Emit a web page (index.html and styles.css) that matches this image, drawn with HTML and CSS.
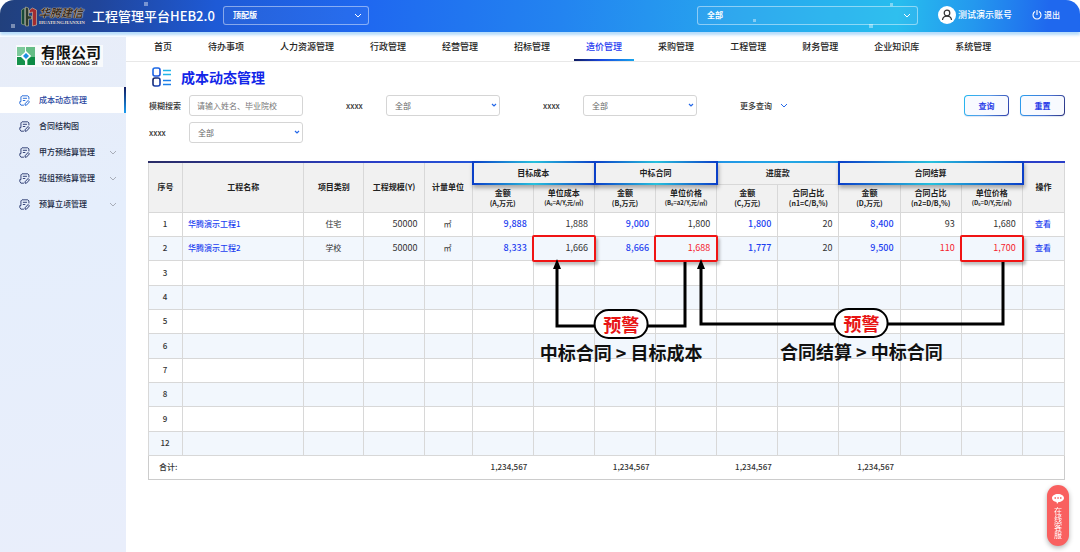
FILE: index.html
```html
<!DOCTYPE html>
<html lang="zh-CN">
<head>
    <meta charset="UTF-8">
    <meta name="viewport" content="width=device-width, initial-scale=1.0">
    <title>成本动态管理 - 工程管理平台HEB2.0</title>
    <link rel="stylesheet" href="styles.css">
</head>
<body>
    <svg class="sprite" aria-hidden="true">
        <symbol id="icon-doc" viewBox="0 0 20 20">
            <path d="M18 8V3.500L16 1.500H5.500L3.500 3.500V12H1.500v3.500L3.500 18.500H9" fill="none" stroke="currentColor" stroke-width="1.700" stroke-linejoin="round"/>
            <path d="M7 6h7.500M7 10h4.500" stroke="currentColor" stroke-width="1.700"/>
            <path d="M11 16l5.500-6 2.500 2.500-5.500 6H11z" fill="none" stroke="currentColor" stroke-width="1.800" stroke-linejoin="round"/>
        </symbol>
        <symbol id="icon-down" viewBox="0 0 8 5">
            <path d="M1 1l3 3 3-3" fill="none" stroke="currentColor"/>
        </symbol>
    </svg>

    <header class="topbar">
        <i class="dot dot-1"></i><i class="dot dot-2"></i><i class="dot dot-3"></i><i class="dot dot-4"></i><i class="dot dot-5"></i>
        <div class="brand">
            <svg class="brand-mark" viewBox="0 0 17 21" aria-hidden="true">
                <path d="M1 4l3-2v17l-3-1z" fill="#174a38" stroke="#a9b08c" stroke-width=".6"/>
                <path d="M5 1l3 1v8h3v3H8v7H5z" fill="#2c3a2c" stroke="#c9c39c" stroke-width=".6"/>
                <path d="M9 4l3-2 4 2v15l-4 1V6L9 7z" fill="#a32c30" stroke="#d9c3a4" stroke-width=".6"/>
            </svg>
            <div class="brand-name">
                <span class="brand-cn">华腾建信</span>
                <span class="brand-en">HUATENGJIANXIN</span>
            </div>
            <span class="brand-title">工程管理平台HEB2.0</span>
        </div>
        <select class="top-select" aria-label="版本"><option>顶配版</option></select>
        <select class="top-select top-select-wide" aria-label="范围"><option>全部</option></select>
        <div class="user">
            <svg class="avatar" viewBox="0 0 18 18" aria-hidden="true">
                <circle cx="9" cy="9" r="9" fill="#fff"/>
                <circle cx="9" cy="7" r="2.800" fill="none" stroke="#333" stroke-width="1.200"/>
                <path d="M4.500 14c.3-5.300 8.700-5.300 9 0" fill="none" stroke="#333" stroke-width="1.200"/>
            </svg>
            <span>测试演示账号</span>
        </div>
        <button type="button" class="logout">
            <svg viewBox="0 0 10 10" aria-hidden="true"><path d="M5 0v5M3 1.600a4 4 0 1 0 4 0" fill="none" stroke="currentColor" stroke-width="1.100"/></svg>
            退出
        </button>
    </header>

    <div class="layout">
        <aside class="sidebar">
            <div class="company">
                <svg viewBox="0 0 20 20" aria-hidden="true">
                    <path d="M1 1h8v7H7L5 10H1z" fill="#7cc99b"/>
                    <path d="M10 1h9v18h-8v-6l4-3-5-4z" fill="#65bd86"/>
                    <path d="M1 11h4l4 4v4H1z" fill="#15924c"/>
                    <path d="M12 13l3-2h4v8h-7z" fill="#0c8a44"/>
                    <path d="M10 5l5 5-5 5-5-5z" fill="#fff"/>
                    <path d="M10 7l3 3-3 3-3-3z" fill="#1c8fe0"/>
                </svg>
                <div class="company-name">
                    <span class="company-cn">有限公司</span>
                    <span class="company-en">YOU XIAN GONG SI</span>
                </div>
            </div>
            <nav class="side-nav" aria-label="侧栏">
                <a href="#" class="active"><svg class="doc"><use href="#icon-doc"/></svg>成本动态管理</a>
                <a href="#"><svg class="doc"><use href="#icon-doc"/></svg>合同结构图</a>
                <a href="#"><svg class="doc"><use href="#icon-doc"/></svg>甲方预结算管理<svg class="arrow"><use href="#icon-down"/></svg></a>
                <a href="#"><svg class="doc"><use href="#icon-doc"/></svg>班组预结算管理<svg class="arrow"><use href="#icon-down"/></svg></a>
                <a href="#"><svg class="doc"><use href="#icon-doc"/></svg>预算立项管理<svg class="arrow"><use href="#icon-down"/></svg></a>
            </nav>
        </aside>

        <main class="main">
            <nav class="main-nav" aria-label="主导航">
                <a href="#">首页</a>
                <a href="#">待办事项</a>
                <a href="#">人力资源管理</a>
                <a href="#">行政管理</a>
                <a href="#">经营管理</a>
                <a href="#">招标管理</a>
                <a href="#" class="active">造价管理</a>
                <a href="#">采购管理</a>
                <a href="#">工程管理</a>
                <a href="#">财务管理</a>
                <a href="#">企业知识库</a>
                <a href="#">系统管理</a>
            </nav>

            <section class="content">
                <div class="page-title">
                    <svg viewBox="0 0 20 20" aria-hidden="true">
                        <defs>
                            <linearGradient id="title-a" x2="1" y2="1"><stop stop-color="#1d6fe8"/><stop offset="1" stop-color="#1d4fd8"/></linearGradient>
                            <linearGradient id="title-b" x2="1" y2="1"><stop stop-color="#121f58"/><stop offset="1" stop-color="#1a49c8"/></linearGradient>
                        </defs>
                        <rect x="1" y="1" width="7" height="8" rx="2" fill="none" stroke="url(#title-a)" stroke-width="1.600"/>
                        <rect x="1" y="11" width="7" height="8" rx="2" fill="none" stroke="url(#title-b)" stroke-width="1.600"/>
                        <path d="M11 3.500h8M11 7.500h8" stroke="#21b4e8" stroke-width="1.400"/>
                        <path d="M11 13.500h8M11 17.500h8" stroke="#1c7fe8" stroke-width="1.400"/>
                    </svg>
                    <h1>成本动态管理</h1>
                </div>

                <form class="filters">
                    <div class="field"><label for="keyword">模糊搜索</label><input id="keyword" type="text" placeholder="请输入姓名、毕业院校"></div>
                    <div class="field"><label for="filter1">xxxx</label><select id="filter1"><option>全部</option></select></div>
                    <div class="field"><label for="filter2">xxxx</label><select id="filter2"><option>全部</option></select></div>
                    <button type="button" class="more">更多查询 <svg><use href="#icon-down"/></svg></button>
                    <div class="actions">
                        <button type="submit" class="btn">查询</button>
                        <button type="reset" class="btn btn-reset">重置</button>
                    </div>
                    <div class="field"><label for="filter3">xxxx</label><select id="filter3"><option>全部</option></select></div>
                </form>

                <div class="table-wrap">
                    <table class="cost-table">
                        <colgroup>
                            <col class="c-no"><col class="c-name"><col class="c-type"><col class="c-type"><col class="c-unit">
                            <col span="9" class="c-num"><col class="c-op">
                        </colgroup>
                        <thead>
                            <tr class="head-group">
                                <th rowspan="2">序号</th>
                                <th rowspan="2">工程名称</th>
                                <th rowspan="2">项目类别</th>
                                <th rowspan="2">工程规模(Y)</th>
                                <th rowspan="2">计量单位</th>
                                <th colspan="2" class="marked">目标成本</th>
                                <th colspan="2" class="marked">中标合同</th>
                                <th colspan="2">进度款</th>
                                <th colspan="3" class="marked">合同结算</th>
                                <th rowspan="2">操作</th>
                            </tr>
                            <tr class="head-sub">
                                <th>金额<span>(A,万元)</span></th>
                                <th>单位成本<small>(A₀=A/Y,元/㎡)</small></th>
                                <th>金额<span>(B,万元)</span></th>
                                <th>单位价格<small>(B₀=a2/Y,元/㎡)</small></th>
                                <th>金额<span>(C,万元)</span></th>
                                <th>合同占比<span>(n1=C/B,%)</span></th>
                                <th>金额<span>(D,万元)</span></th>
                                <th>合同占比<span>(n2=D/B,%)</span></th>
                                <th>单位价格<small>(D₀=D/Y,元/㎡)</small></th>
                            </tr>
                        </thead>
                        <tbody>
                            <tr>
                                <td>1</td><td class="name"><a href="#">华腾演示工程1</a></td><td>住宅</td><td class="num">50000</td><td>㎡</td>
                                <td class="num blue">9,888</td><td class="num">1,888</td><td class="num blue">9,000</td><td class="num">1,800</td>
                                <td class="num blue">1,800</td><td class="num">20</td><td class="num blue">8,400</td><td class="num">93</td><td class="num">1,680</td>
                                <td><a href="#">查看</a></td>
                            </tr>
                            <tr>
                                <td>2</td><td class="name"><a href="#">华腾演示工程2</a></td><td>学校</td><td class="num">50000</td><td>㎡</td>
                                <td class="num blue">8,333</td><td class="num alert">1,666</td><td class="num blue">8,666</td><td class="num red alert">1,688</td>
                                <td class="num blue">1,777</td><td class="num">20</td><td class="num blue">9,500</td><td class="num red">110</td><td class="num red alert">1,700</td>
                                <td><a href="#">查看</a></td>
                            </tr>
                            <tr><td>3</td><td></td><td></td><td></td><td></td><td></td><td></td><td></td><td></td><td></td><td></td><td></td><td></td><td></td><td></td></tr>
                            <tr><td>4</td><td></td><td></td><td></td><td></td><td></td><td></td><td></td><td></td><td></td><td></td><td></td><td></td><td></td><td></td></tr>
                            <tr><td>5</td><td></td><td></td><td></td><td></td><td></td><td></td><td></td><td></td><td></td><td></td><td></td><td></td><td></td><td></td></tr>
                            <tr><td>6</td><td></td><td></td><td></td><td></td><td></td><td></td><td></td><td></td><td></td><td></td><td></td><td></td><td></td><td></td></tr>
                            <tr><td>7</td><td></td><td></td><td></td><td></td><td></td><td></td><td></td><td></td><td></td><td></td><td></td><td></td><td></td><td></td></tr>
                            <tr><td>8</td><td></td><td></td><td></td><td></td><td></td><td></td><td></td><td></td><td></td><td></td><td></td><td></td><td></td><td></td></tr>
                            <tr><td>9</td><td></td><td></td><td></td><td></td><td></td><td></td><td></td><td></td><td></td><td></td><td></td><td></td><td></td><td></td></tr>
                            <tr><td>12</td><td></td><td></td><td></td><td></td><td></td><td></td><td></td><td></td><td></td><td></td><td></td><td></td><td></td><td></td></tr>
                        </tbody>
                        <tfoot>
                            <tr>
                                <td colspan="5" class="total-label">合计:</td>
                                <td class="num">1,234,567</td><td></td><td class="num">1,234,567</td><td></td>
                                <td class="num">1,234,567</td><td></td><td class="num">1,234,567</td><td></td><td></td><td></td>
                            </tr>
                        </tfoot>
                    </table>

                    <!-- warning arrows between the compared cells -->
                    <svg class="links" viewBox="0 0 917 318" preserveAspectRatio="none" aria-hidden="true">
                        <g fill="none" stroke="#000" stroke-width="3">
                            <path d="M409 106v59h128v-64"/>
                            <path d="M553 106v57h302v-62"/>
                        </g>
                        <path d="M409 98l4 10h-8zM553 98l4 10h-8z"/>
                    </svg>
                    <div class="warning warning-target"><span class="badge">预警</span><strong>中标合同 &gt; 目标成本</strong></div>
                    <div class="warning warning-settle"><span class="badge">预警</span><strong>合同结算 &gt; 中标合同</strong></div>
                </div>
            </section>
        </main>
    </div>

    <button type="button" class="service">
        <svg viewBox="0 0 12 10" aria-hidden="true">
            <path d="M6 0c3.500 0 6 1.800 6 4S9.500 8 6.500 8L5 10 4.500 8C2 7.800 0 6.200 0 4s2.500-4 6-4z" fill="#fff"/>
            <path d="M2.500 4h1.500M5.300 4h1.500M8 4h1.500" stroke="#f9605f" stroke-width="1.300"/>
        </svg>
        <span>在线客服</span>
    </button>
</body>
</html>
```
FILE: styles.css
```css
:root {
    --blue: #1d3ff0;
    --line: #d8d8d8;
    --text: #333;
    --red: #f5222d;
    --font: "Noto Sans CJK SC", "Open Sans", sans-serif;
}
*, *::before, *::after { box-sizing: border-box; }
body { margin: 0; min-height: 100vh; display: flex; flex-direction: column; background: #fff; color: var(--text); font-family: var(--font); font-size: 8px; line-height: 12px; }
a { color: inherit; text-decoration: none; }
button, input, select { font: inherit; color: inherit; margin: 0; }
button { cursor: pointer; background: none; border: 0; padding: 0; }
select { appearance: none; }
.sprite { position: absolute; width: 0; height: 0; }

/* top bar */
.topbar {
    position: relative; display: flex; align-items: center; height: 32px; padding: 0 20px;
    border-radius: 14px 14px 0 0; color: #fff; box-shadow: 0 3px 3px #b5dcfb;
    background: linear-gradient(95deg, #21407c 0%, #20459a 9%, #1e5ad6 20%, #1f68f0 34%, #2384f0 52%, #27a5ee 68%, #27bdee 83%, #2498ee 90%, #1f68ee 97%);
}
.dot { position: absolute; width: 4px; height: 4px; background: #fff; opacity: .4; }
.dot-1 { left: 11px; top: 24px; }
.dot-2 { left: 144px; top: 2px; }
.dot-3 { left: 753px; top: 19px; width: 3px; height: 3px; }
.dot-4 { left: 869px; top: 24px; }
.dot-5 { left: 890px; top: 3px; width: 3px; height: 3px; }
.brand { display: flex; align-items: center; width: 203px; }
.brand-mark { width: 18px; height: 21px; flex-shrink: 0; }
.brand-name { display: flex; flex-direction: column; width: 46px; margin: 0 7px 0 1px; white-space: nowrap; }
.brand-cn { color: #3a2c20; font-size: 11px; font-weight: 700; font-style: italic; line-height: 13px; text-shadow: 0 0 1px #f5ead0, 0 0 1px #f5ead0; }
.brand-en { font-family: "Liberation Serif", serif; font-size: 5px; font-weight: 700; line-height: 7px; color: #e0dcd0; }
.brand-title { font-size: 13px; font-weight: 500; line-height: 20px; white-space: nowrap; }
.top-select {
    width: 146px; height: 19px; margin-bottom: 2px; padding: 0 9px; border: 1px solid rgba(255, 255, 255, .45); border-radius: 3px; font-weight: 600;
    background: rgba(255, 255, 255, .04) url("data:image/svg+xml,%3Csvg xmlns='http://www.w3.org/2000/svg' width='8' height='5'%3E%3Cpath d='M1 1l3 3 3-3' fill='none' stroke='white'/%3E%3C/svg%3E") no-repeat right 6px center;
}
.top-select option { color: var(--text); }
.top-select-wide { width: 221px; margin-left: auto; }
.user { display: flex; align-items: center; gap: 2px; margin: 0 20px 2px 20px; font-size: 9px; font-weight: 500; }
.avatar { width: 18px; height: 18px; }
.logout { display: flex; align-items: center; gap: 2px; margin-bottom: 2px; font-weight: 500; }
.logout svg { width: 10px; height: 10px; }

.layout { display: flex; flex: 1; }

/* sidebar */
.sidebar { width: 126px; flex-shrink: 0; margin-top: 5px; background: linear-gradient(170deg, #e8edf8, #e5eefc 35%, #e9eefb); }
.company { display: flex; align-items: center; gap: 5px; height: 22px; width: 87px; margin: 8px 0 20px 16px; background: #f8fafc; }
.company svg { width: 20px; height: 20px; flex-shrink: 0; }
.company-name { display: flex; flex-direction: column; color: #111; white-space: nowrap; }
.company-cn { font-family: "Liberation Sans", "Noto Sans CJK SC", sans-serif; font-size: 15px; font-weight: 700; line-height: 15px; }
.company-en { font-family: "Liberation Sans", sans-serif; font-size: 6px; font-weight: 700; line-height: 7px; }
.side-nav a { display: flex; align-items: center; height: 26px; padding: 0 9px 0 19px; color: #222b45; font-weight: 500; }
.side-nav .doc { width: 11px; height: 11px; margin-right: 9px; color: #2b3a70; }
.side-nav .arrow { width: 8px; height: 5px; margin-left: auto; color: #a8adb8; }
.side-nav .active { background: linear-gradient(#101a60, #1a9cf0) right / 2px 100% no-repeat #fff; color: #2a47a0; }
.side-nav .active .doc { color: #2168d8; }

/* main navigation */
.main { flex: 1; min-width: 0; }
.main-nav { display: flex; gap: 12px; height: 30px; padding-left: 16px; border-bottom: 1px solid #e8e8e8; }
.main-nav a { padding: 0 12px; font-size: 9px; font-weight: 500; line-height: 30px; color: #222; white-space: nowrap; }
.main-nav .active { color: #2539f0; background: linear-gradient(90deg, #101c60, #1946e0 45%, #16a4ec) bottom / 100% 2px no-repeat; }

.content { padding: 5px 15px 0 22px; }
.page-title { display: flex; align-items: center; gap: 9px; height: 20px; padding-left: 4px; }
.page-title svg { width: 20px; height: 20px; }
h1 { margin: 0; font-size: 14px; font-weight: 700; line-height: 20px; color: #1226e8; }

/* filters */
.filters { display: flex; flex-wrap: wrap; align-items: center; gap: 6px 43px; margin-top: 8px; padding-left: 1px; }
.field { display: flex; align-items: center; }
.field label { width: 40px; font-weight: 500; }
.field input, .field select { width: 114px; height: 21px; padding: 0 8px; border: 1px solid #d5d5d5; border-radius: 3px; background-color: #fff; color: #666; }
.field input { padding: 0 7px; }
.field input::placeholder { color: #777; opacity: 1; }
.field select { background: url("data:image/svg+xml,%3Csvg xmlns='http://www.w3.org/2000/svg' width='6' height='5'%3E%3Cpath d='M1 1l2 2 2-2' fill='none' stroke='%232468e8' stroke-width='1.2'/%3E%3C/svg%3E") no-repeat right 2px center; }
.more { display: flex; align-items: center; gap: 8px; font-weight: 500; }
.more svg { width: 8px; height: 5px; color: #2468e8; }
.actions { display: flex; gap: 11px; margin-left: auto; }
.btn {
    width: 45px; height: 21px; border: 1px solid transparent; border-radius: 4px; color: #2a3de8; font-weight: 600;
    background: linear-gradient(#f8faff, #f8faff) padding-box, linear-gradient(110deg, #20b8f0, #5a9be8 50%, #2a3aa8) border-box;
    box-shadow: 0 1px 1px #dfe6f2;
}
.btn-reset { background: linear-gradient(#f8faff, #f8faff) padding-box, linear-gradient(110deg, #2aa0f0, #4a70d0 60%, #29307c) border-box; }

/* cost table */
.table-wrap { position: relative; margin-top: 18px; padding-top: 2px; background: linear-gradient(90deg, #2a2c66, #2a3fc8 25%, #1f6ae8 45%, #22a8e4 70%, #2a3fc8 92%) top / 100% 2px no-repeat; }
.cost-table { width: 100%; table-layout: fixed; border-collapse: collapse; text-align: center; }
.c-no { width: 34px; }
.c-name { width: 121px; }
.c-type { width: 60px; }
.c-unit { width: 48px; }
.c-num { width: 61px; }
.c-op { width: 42px; }
.cost-table th { padding: 0; border: 1px solid var(--line); background: #f1f1f1; color: #222; font-weight: 600; white-space: nowrap; }
.cost-table thead tr:first-child th { border-top: 0; }
.head-group { height: 21px; }
.head-sub { height: 28px; line-height: 10px; }
.head-sub span, .head-sub small { display: block; }
.head-sub span { font-size: 7px; }
.head-sub small { font-size: 6px; }
.cost-table td { height: 24px; padding: 0 6px 0 5px; border: 1px solid var(--line); }
.cost-table tbody tr:nth-child(3n) td { height: 25px; }
.cost-table tbody tr:nth-child(even) { background: #f2f7fd; }
.cost-table td:first-child { font-weight: 500; }
.cost-table .name { text-align: left; }
.cost-table .num { text-align: right; }
.cost-table tbody .num { font-size: 9px; }
.cost-table td a, .cost-table .blue { color: var(--blue); font-weight: 500; }
.cost-table .red { color: var(--red); }
.cost-table tfoot td { border-width: 1px 0; border-color: #ccc; font-weight: 500; }
.cost-table tfoot td:first-child { border-left-width: 1px; }
.cost-table tfoot td:last-child { border-right-width: 1px; }
.cost-table .total-label { padding-left: 10px; text-align: left; }

.marked, .alert { position: relative; }
.marked::after { content: ""; position: absolute; inset: -2px -2px -1px -1px; border: 2px solid; border-image: linear-gradient(90deg, #0b3fc8, #28c0dc 50%, #0b3fc8) 1; box-shadow: 1px 3px 4px rgba(0, 0, 0, .3); }
.alert::after { content: ""; position: absolute; inset: -2px; border: 2px solid #f01414; border-radius: 2px; box-shadow: 2px 3px 3px rgba(0, 0, 0, .25); }

/* warnings drawn over the table */
.links { position: absolute; inset: 0; width: 100%; height: 318px; }
.warning { position: absolute; display: flex; flex-direction: column; align-items: center; gap: 2px; transform: translateX(-50%); white-space: nowrap; color: #111; }
.warning-target { left: 51.6%; top: 148px; }
.warning-settle { left: 77.8%; top: 147px; }
.badge { width: 55px; height: 30px; border: 2px solid #000; border-radius: 15px; background: #fff; color: #e81414; font-size: 18px; font-weight: 700; line-height: 26px; text-align: center; }
.warning strong { font-size: 18px; font-weight: 700; line-height: 22px; }

/* online service */
.service {
    position: fixed; right: 11px; bottom: 6px; display: flex; flex-direction: column; align-items: center; gap: 3px;
    width: 22px; height: 61px; padding-top: 9px; border-radius: 11px; background: #f9605f; color: #fff; box-shadow: 0 2px 5px rgba(0, 0, 0, .3);
}
.service svg { width: 12px; height: 10px; }
.service span { width: 8px; line-height: 8px; word-break: break-all; }
```
